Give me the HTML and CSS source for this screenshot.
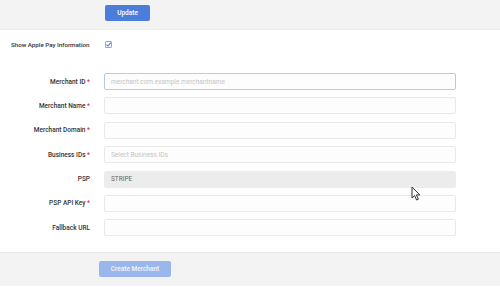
FILE: index.html
```html
<!DOCTYPE html>
<html lang="en">
<head>
<meta charset="UTF-8">
<meta name="viewport" content="width=device-width, initial-scale=1.0">
<title>Merchant</title>
<link rel="stylesheet" href="styles.css">
</head>
<body>
<header class="topbar">
  <button class="btn">Update</button>
</header>

<section class="form">
  <div class="apple-row">
    <span class="apple-label">Show Apple Pay Information</span>
    <span class="check">
      <svg width="7" height="7" viewBox="0 0 7 7"><path d="M1.5 3.6 L3 5 L5.8 1.6" fill="none" stroke="#4a7fdb" stroke-width="1.1"/></svg>
    </span>
  </div>

  <div class="fields">
    <label class="label">Merchant ID <span class="req">*</span></label>
    <input class="input focused" type="text" placeholder="merchant.com.example.merchantname">

    <label class="label">Merchant Name <span class="req">*</span></label>
    <input class="input" type="text">

    <label class="label">Merchant Domain <span class="req">*</span></label>
    <input class="input" type="text">

    <label class="label">Business IDs <span class="req">*</span></label>
    <input class="input" type="text" placeholder="Select Business IDs">

    <label class="label">PSP</label>
    <div class="input readonly">STRIPE</div>

    <label class="label">PSP API Key <span class="req">*</span></label>
    <input class="input" type="text">

    <label class="label">Fallback URL</label>
    <input class="input" type="text">
  </div>
</section>

<footer class="footer">
  <button class="btn disabled">Create Merchant</button>
</footer>

<svg class="cursor" width="12" height="16" viewBox="0 0 12 16">
  <path d="M1 1 L1 12 L3.6 9.6 L5.6 14 L7.4 13.2 L5.4 8.9 L8.8 8.9 Z" fill="#fff" stroke="#333" stroke-width="1"/>
</svg>
</body>
</html>
```

FILE: styles.css
```css
body {
  margin: 0;
  padding: 0;
  background-color: #ffffff;
  font-family: Roboto, "Liberation Sans", sans-serif;
  color: #333;
  position: relative;
  width: 500px;
  height: 287px;
  overflow: hidden;
}

.topbar {
  background-color: #f3f3f3;
  height: 30px;
  box-sizing: border-box;
  padding: 5px 0 0 105px;
  border-bottom: 1px solid #ececec;
}

.btn {
  display: block;
  height: 16px;
  padding: 0;
  border: none;
  border-radius: 2px;
  background-color: #4b7ddb;
  color: white;
  font-family: Roboto, "Liberation Sans", sans-serif;
  font-size: 6.5px;
  font-weight: 500;
  width: 45px;
}

.btn.disabled {
  width: 72px;
  background-color: #9bb6ec;
  color: #f4f7fd;
}

.form {
  height: 222px;
  box-sizing: border-box;
  padding-top: 11px;
}

.apple-row {
  display: flex;
  align-items: center;
  height: 7px;
}

.apple-label {
  flex: none;
  width: 105px;
  padding-left: 11px;
  box-sizing: border-box;
  font-size: 6.2px;
  font-weight: 500;
  color: #333;
  white-space: nowrap;
}

.check {
  width: 5px;
  height: 5px;
  border: 1px solid #8aa8e6;
  border-radius: 1px;
  display: flex;
  align-items: center;
  justify-content: center;
  overflow: visible;
}

.check svg {
  flex: none;
}

.fields {
  display: grid;
  grid-template-columns: 90px 352px;
  column-gap: 14px;
  row-gap: 7.4px;
  align-items: center;
  margin-top: 25px;
}

.label {
  text-align: right;
  font-size: 6.5px;
  font-weight: 500;
  color: #333;
}

.req {
  color: #e0245e;
}

.input {
  height: 17px;
  box-sizing: border-box;
  border: 1px solid #e9e9e9;
  border-radius: 2px;
  background-color: #fdfdfd;
  padding: 0 6px;
  font-family: Roboto, "Liberation Sans", sans-serif;
  font-size: 6.5px;
  color: #555;
  outline: none;
  margin: 0;
}

.input::placeholder {
  color: #c4c4c4;
}

.input.focused {
  border-color: #b7c8e8;
}

.input.readonly {
  display: flex;
  align-items: center;
  background-color: #ececec;
  border-color: #ececec;
  color: #666;
}

.footer {
  background-color: #f3f3f3;
  border-top: 1px solid #e6e6e6;
  height: 34px;
  box-sizing: border-box;
  padding: 8px 0 0 99px;
}

.cursor {
  position: absolute;
  left: 411px;
  top: 186px;
}
```
